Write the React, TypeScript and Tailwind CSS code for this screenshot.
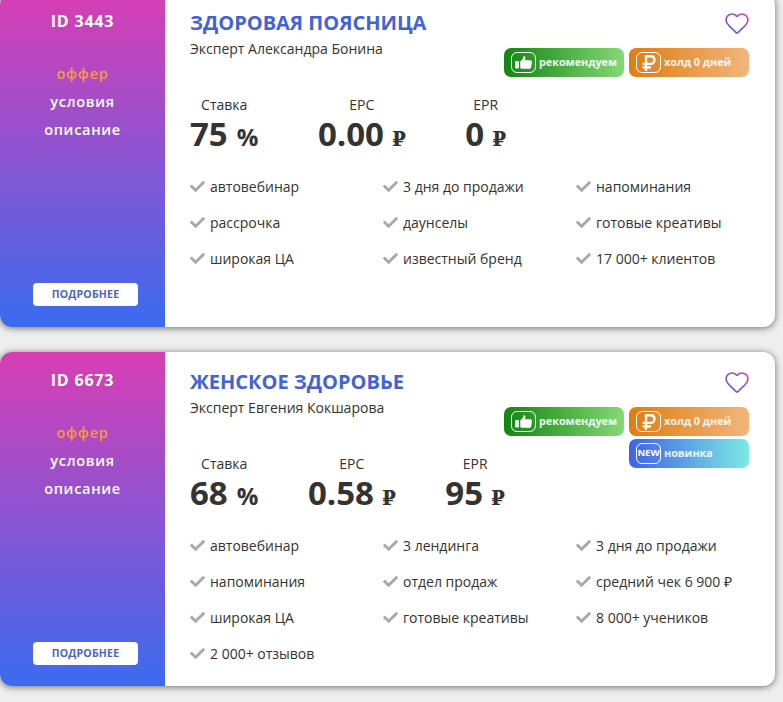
import type { ReactNode } from "react";
import { FaCheck } from "react-icons/fa";

interface Offer {
  id: string;
  title: string;
  expert: string;
  stats: { label: string; value: string; unit: string }[];
  statsGap: string;
  features: string[];
  isNew?: boolean;
}

const offers: Offer[] = [
  {
    id: "3443",
    title: "ЗДОРОВАЯ ПОЯСНИЦА",
    expert: "Эксперт Александра Бонина",
    stats: [
      { label: "Ставка", value: "75", unit: "%" },
      { label: "EPC", value: "0.00", unit: "₽" },
      { label: "EPR", value: "0", unit: "₽" },
    ],
    statsGap: "gap-[59.5px]",
    features: [
      "автовебинар",
      "3 дня до продажи",
      "напоминания",
      "рассрочка",
      "даунселы",
      "готовые креативы",
      "широкая ЦА",
      "известный бренд",
      "17 000+ клиентов",
    ],
  },
  {
    id: "6673",
    title: "ЖЕНСКОЕ ЗДОРОВЬЕ",
    expert: "Эксперт Евгения Кокшарова",
    stats: [
      { label: "Ставка", value: "68", unit: "%" },
      { label: "EPC", value: "0.58", unit: "₽" },
      { label: "EPR", value: "95", unit: "₽" },
    ],
    statsGap: "gap-[49.5px]",
    features: [
      "автовебинар",
      "3 лендинга",
      "3 дня до продажи",
      "напоминания",
      "отдел продаж",
      "средний чек 6 900 ₽",
      "широкая ЦА",
      "готовые креативы",
      "8 000+ учеников",
      "2 000+ отзывов",
    ],
    isNew: true,
  },
];

function Heart({ id }: { id: string }) {
  return (
    <svg width="24" height="21" viewBox="1 3 22 19.2" fill="none" className="shrink-0">
      <defs>
        <linearGradient id={id} x1="1" y1="0" x2="0" y2="1">
          <stop offset="0" stopColor="#e23cb0" />
          <stop offset="1" stopColor="#3f66e8" />
        </linearGradient>
      </defs>
      <path
        d="M2 9.5a5.5 5.5 0 0 1 9.591-3.676.56.56 0 0 0 .818 0A5.49 5.49 0 0 1 22 9.5c0 2.29-1.5 4-3 5.5l-6.2 5.9a1.2 1.2 0 0 1-1.6 0L5 15c-1.5-1.5-3-3.2-3-5.5"
        stroke={`url(#${id})`}
        strokeWidth="1.5"
        strokeLinejoin="round"
      />
    </svg>
  );
}

function Badge({ icon, label, colors }: { icon: ReactNode; label: string; colors: string }) {
  return (
    <div className={`flex h-[29px] w-[120px] items-center gap-[3px] rounded-[7px] pl-[7px] ${colors}`}>
      <div className="flex h-[21px] w-[25px] shrink-0 items-center justify-center rounded-[6px] border border-white">
        {icon}
      </div>
      <span className="text-[10.8px] font-bold leading-none whitespace-nowrap text-white/90">{label}</span>
    </div>
  );
}

function ThumbIcon() {
  return (
    <svg width="17" height="13" viewBox="0 0 18 14" fill="white">
      <rect x="0" y="5.5" width="4" height="8" rx="0.8" />
      <path d="M5.5 5.8 L8.6 2.6 L9 0.4 C10.6 0 11.4 1.2 11 3 L10.6 4.6 L16.2 4.6 C17.6 4.6 18 5.6 18 6.6 L17.2 12.4 C17 13.4 16.4 13.8 15.4 13.8 L7.4 13.8 C6.4 13.8 5.5 13.2 5.5 12.4 Z" />
    </svg>
  );
}

function RubleIcon() {
  return (
    <svg width="14" height="16" viewBox="0 0 14 16" fill="none" stroke="white" strokeWidth="2.4">
      <path d="M4 16 V1.3 H8.8 C13.6 1.3 13.6 8.9 8.8 8.9 H0.6" />
      <path d="M0.6 12.4 H9" />
    </svg>
  );
}

function OfferCard({ offer, className }: { offer: Offer; className?: string }) {
  return (
    <div className={`flex h-[334px] w-[775px] overflow-hidden rounded-[12px] bg-white shadow-[0_1px_7px_rgba(0,0,0,0.55)] ${className ?? ""}`}>
      <div className="flex w-[165px] shrink-0 flex-col items-center bg-linear-to-b/srgb from-[#d83eb4] to-[#3b6bef] pt-[17px] pb-[21px] text-white">
        <div className="text-[16px] leading-[22px] font-bold tracking-[0.8px]">ID {offer.id}</div>
        <div className="mt-[31px] flex flex-col items-center gap-[6px] text-[14.5px] leading-[22px] font-semibold tracking-[0.7px]">
          <span className="text-[#f9993d]">оффер</span>
          <span>условия</span>
          <span>описание</span>
        </div>
        <button className="mt-auto ml-[6px] h-[23px] w-[105px] rounded-[4px] bg-white text-[10.5px] font-bold tracking-[0.2px] text-[#4a63c9]">
          ПОДРОБНЕЕ
        </button>
      </div>

      <div className="flex min-w-0 flex-1 flex-col pt-[13px] pl-[25px]">
        <div className="flex h-[89px] justify-between">
          <div>
            <h2 className="text-[20px] leading-[34px] font-bold text-[#4362d8]">{offer.title}</h2>
            <p className="text-[14px] leading-[18px] text-[#333]">{offer.expert}</p>
          </div>
          <div className="mt-[7px] mr-[26px] flex w-[245px] shrink-0 flex-col items-end">
            <Heart id={`heart-${offer.id}`} />
            <div className="mt-[14px] flex flex-wrap justify-end gap-x-[5px] gap-y-[3px]">
              <Badge
                icon={<ThumbIcon />}
                label="рекомендуем"
                colors="bg-linear-to-r/srgb from-[#128512] to-[#84d975]"
              />
              <Badge
                icon={<RubleIcon />}
                label="холд 0 дней"
                colors="bg-linear-to-r/srgb from-[#e07d10] to-[#f0b67c]"
              />
              {offer.isNew && (
                <Badge
                  icon={<span className="text-[9.5px] font-bold text-white">NEW</span>}
                  label="новинка"
                  colors="bg-linear-to-r/srgb from-[#3f63e6] to-[#7ceae4]"
                />
              )}
            </div>
          </div>
        </div>

        <div className={`flex ${offer.statsGap}`}>
          {offer.stats.map((stat) => (
            <div key={stat.label} className="flex flex-col items-center">
              <div className="text-[14px] leading-[20px] text-[#333]">{stat.label}</div>
              <div className="text-[33px] leading-[38px] font-bold whitespace-nowrap text-[#333]">
                {stat.value}
                {stat.unit === "%" ? (
                  <span className="ml-[9px] text-[24px]">{stat.unit}</span>
                ) : (
                  <span className="ml-[8px] font-['DejaVu_Serif',serif] text-[20px]">{stat.unit}</span>
                )}
              </div>
            </div>
          ))}
        </div>

        <div className="mt-[10px] grid grid-cols-[193px_193px_193px] auto-rows-[36px]">
          {offer.features.map((feature) => (
            <div key={feature} className="flex items-center gap-[5px] text-[14px] text-[#333]">
              <FaCheck size={15} color="#a9a9a9" className="shrink-0" />
              <span>{feature}</span>
            </div>
          ))}
        </div>
      </div>
    </div>
  );
}

export default function App() {
  return (
    <div className="h-[702px] w-[783px] overflow-hidden bg-[#eeeeee] font-['Open_Sans',sans-serif]">
      <div className="flex flex-col gap-[25px]">
        <OfferCard offer={offers[0]} className="-mt-[7px]" />
        <OfferCard offer={offers[1]} />
      </div>
    </div>
  );
}
